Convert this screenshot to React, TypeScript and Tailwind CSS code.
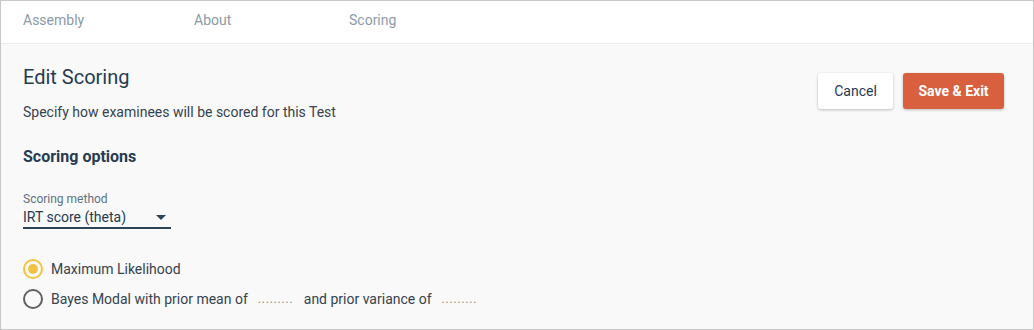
import React from "react";

export default function App() {
  return (
    <div
      className="w-[1034px] h-[330px] border border-[#c8c8c8] bg-[#f9f9f9] flex flex-col overflow-hidden"
      style={{ fontFamily: "Roboto, 'Liberation Sans', sans-serif" }}
    >
      <div className="h-[43px] bg-white border-b border-[#ececec] flex items-start text-[14px] text-[#8d9aa6]">
        <div className="pt-[9px] pl-[22px] w-[193px]">Assembly</div>
        <div className="pt-[9px] w-[155px]">About</div>
        <div className="pt-[9px]">Scoring</div>
      </div>
      <div className="flex-1 px-[22px] pt-[21px] flex justify-between">
        <div className="flex flex-col">
          <h1 className="text-[20px] leading-[24px] text-[#253b52]">Edit Scoring</h1>
          <p className="mt-[13px] text-[14px] leading-[20px] text-[#36424e]">
            Specify how examinees will be scored for this Test
          </p>
          <h2 className="mt-[24px] text-[16px] leading-[22px] font-bold text-[#253b52]">Scoring options</h2>
          <div className="mt-[24px] text-[12px] leading-[14px] text-[#5e7284]">Scoring method</div>
          <div className="w-[148px] flex items-center justify-between border-b-2 border-[#2c4458] h-[22px] mt-[1px]">
            <span className="text-[14px] leading-[18px] text-[#253b52]">IRT score (theta)</span>
            <svg width="10" height="5" viewBox="0 0 10 5" className="mr-[5px]">
              <path d="M0 0 L10 0 L5 5 Z" fill="#2c4458" />
            </svg>
          </div>
          <div className="mt-[30px] flex items-center gap-[8px] h-[20px]">
            <div className="w-[20px] h-[20px] rounded-full border-2 border-[#f2c244] flex items-center justify-center">
              <div className="w-[10px] h-[10px] rounded-full bg-[#f2c244]" />
            </div>
            <span className="text-[14px] text-[#36424e]">Maximum Likelihood</span>
          </div>
          <div className="mt-[10px] flex items-center h-[20px] text-[14px] text-[#36424e]">
            <div className="w-[20px] h-[20px] rounded-full border-2 border-[#616161]" />
            <span className="ml-[8px]">Bayes Modal with prior mean of</span>
            <span className="ml-[10px] w-[34px] text-[#8a8a8a] text-[12px] tracking-[0.8px]">.........</span>
            <span className="ml-[12px]">and prior variance of</span>
            <span className="ml-[10px] w-[36px] text-[#8a8a8a] text-[12px] tracking-[0.8px]">.........</span>
          </div>
        </div>
        <div className="flex gap-[10px] pt-[8px] pr-[7px]">
          <button className="h-[36px] w-[75px] bg-white rounded-[3px] shadow-[0_1px_3px_rgba(0,0,0,0.25)] text-[14px] text-[#253b52]">
            Cancel
          </button>
          <button className="h-[36px] w-[101px] bg-[#d9603f] rounded-[3px] shadow-[0_1px_3px_rgba(0,0,0,0.25)] text-[14px] font-bold text-white">
            Save &amp; Exit
          </button>
        </div>
      </div>
    </div>
  );
}
